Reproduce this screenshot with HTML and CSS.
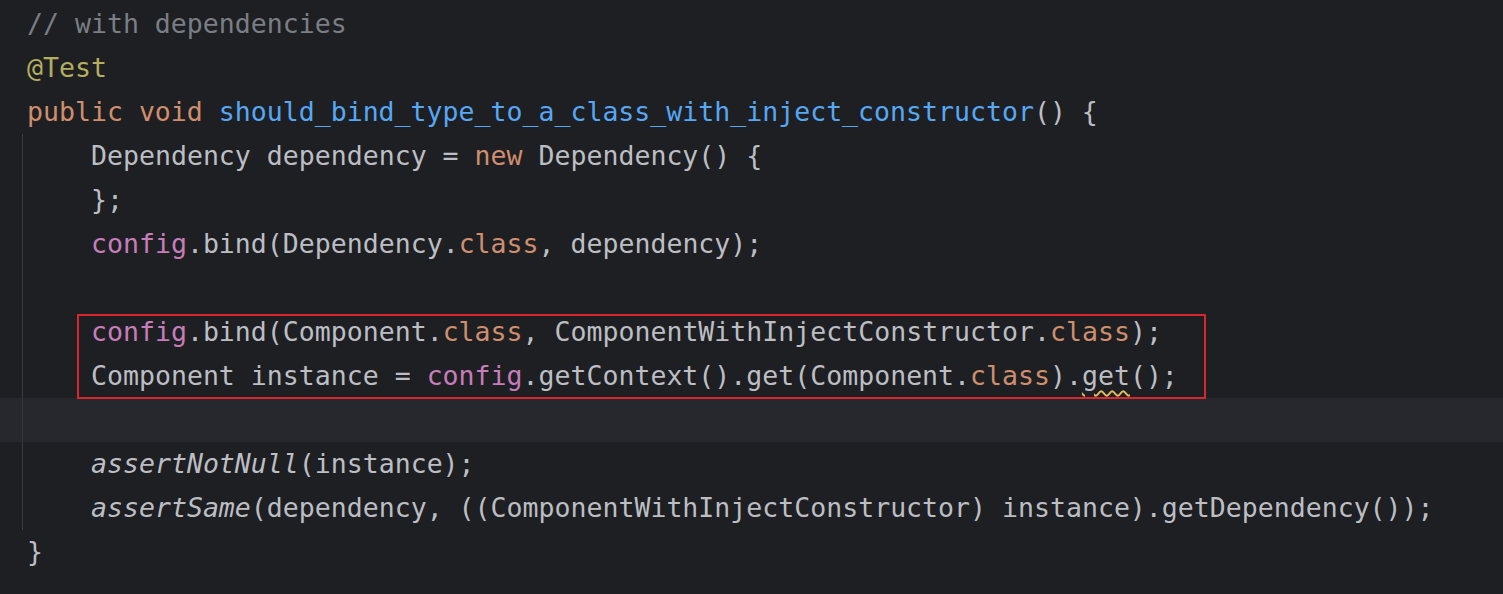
FILE: index.html
```html
<!DOCTYPE html>
<html>
<head>
<meta charset="utf-8">
<link rel="stylesheet" href="styles.css">
</head>
<body>
<div class="editor">
  <div class="line"><span class="cm">// with dependencies</span></div>
  <div class="line"><span class="an">@Test</span></div>
  <div class="line"><span class="kw">public void </span><span class="fn">should_bind_type_to_a_class_with_inject_constructor</span>() {</div>
  <div class="body">
    <div class="line">Dependency dependency = <span class="kw">new </span>Dependency() {</div>
    <div class="line">};</div>
    <div class="line"><span class="fd">config</span>.bind(Dependency.<span class="kw">class</span>, dependency);</div>
    <div class="line"> </div>
    <div class="line"><span class="fd">config</span>.bind(Component.<span class="kw">class</span>, ComponentWithInjectConstructor.<span class="kw">class</span>);</div>
    <div class="line">Component instance = <span class="fd">config</span>.getContext().get(Component.<span class="kw">class</span>).<span class="warn">get</span>();</div>
    <div class="line current"> </div>
    <div class="line"><span class="it">assertNotNull</span>(instance);</div>
    <div class="line"><span class="it">assertSame</span>(dependency, ((ComponentWithInjectConstructor) instance).getDependency());</div>
    <div class="mark"></div>
  </div>
  <div class="line">}</div>
</div>
</body>
</html>
```

FILE: styles.css
```css
html, body {
  margin: 0;
  padding: 0;
  background: #1e1f22;
}
body {
  width: 1503px;
  height: 594px;
  overflow: hidden;
}
.editor {
  padding-top: 2px;
  font-family: "DejaVu Sans Mono", "Liberation Mono", monospace;
  font-size: 26.55px;
  line-height: 44px;
  color: #bcbec4;
}
.line {
  height: 44px;
  padding-left: 27px;
  white-space: pre;
}
.body {
  position: relative;
  margin-left: 22px;
  border-left: 1px solid #393b40;
}
.body .line {
  padding-left: 68px;
}
.body .line.current {
  margin-left: -23px;
  padding-left: 91px;
  background: linear-gradient(to right, #26282e 22px, #34363c 22px, #34363c 23px, #26282e 23px);
}
.cm { color: #7a7e85; }
.an { color: #b3ae60; }
.kw { color: #cf8e6d; }
.fn { color: #56a8f5; }
.fd { color: #c77dbb; }
.it { font-style: italic; }
.warn {
  text-decoration: underline wavy #e2bf5e;
  text-decoration-thickness: 1.5px;
  text-underline-offset: 5px;
}
.mark {
  position: absolute;
  left: 54px;
  top: 180px;
  width: 1125px;
  height: 81px;
  border: 2px solid #d8262c;
}
```
